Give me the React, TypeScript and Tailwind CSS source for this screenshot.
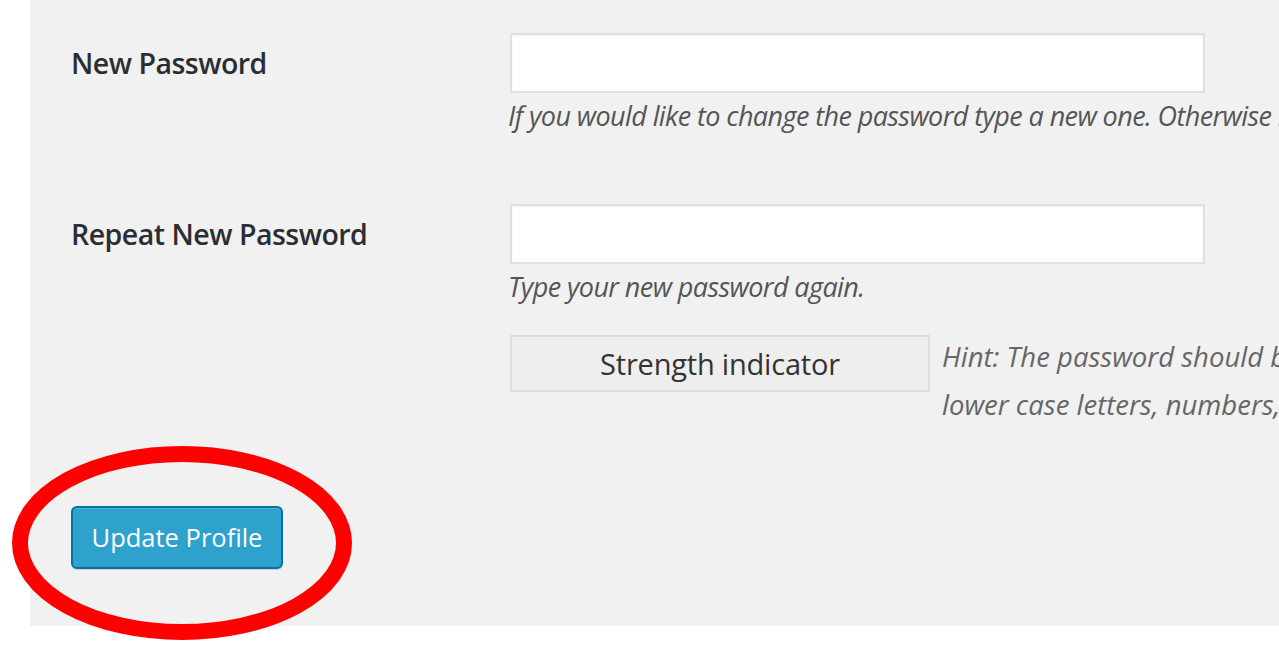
export default function App() {
  const font = { fontFamily: '"Open Sans", "Noto Sans", sans-serif' };

  return (
    <div className="relative h-[646px] w-[1279px] overflow-hidden bg-white" style={font}>
      <div className="ml-[30px] h-[626px] overflow-hidden bg-[#f1f1f1] pl-[41px] pt-[33px]">
        {/* New Password */}
        <div className="flex">
          <div className="flex h-[60px] w-[439px] shrink-0 items-center text-[28.5px] font-semibold tracking-[-0.5px] text-[#2a2e33]">
            New Password
          </div>
          <div className="flex flex-col">
            <div className="h-[60px] w-[695px] border-2 border-[#e0e0e0] bg-white shadow-[inset_0_1px_2px_rgba(0,0,0,0.07)]" />
            <p className="-ml-[2px] mt-[5px] whitespace-nowrap text-[27px] italic leading-[36px] tracking-[-0.6px] text-[#555]">
              If you would like to change the password type a new one. Otherwise leave this blank.
            </p>
          </div>
        </div>

        {/* Repeat New Password */}
        <div className="mt-[70px] flex">
          <div className="flex h-[60px] w-[439px] shrink-0 items-center text-[28.5px] font-semibold tracking-[-0.5px] text-[#2a2e33]">
            Repeat New Password
          </div>
          <div className="flex flex-col">
            <div className="h-[60px] w-[695px] border-2 border-[#e0e0e0] bg-white shadow-[inset_0_1px_2px_rgba(0,0,0,0.07)]" />
            <p className="-ml-[2px] mt-[5px] whitespace-nowrap text-[27px] italic leading-[36px] tracking-[-0.6px] text-[#555]">
              Type your new password again.
            </p>
          </div>
        </div>

        {/* Strength */}
        <div className="mt-[30px] flex">
          <div className="w-[439px] shrink-0" />
          <div className="flex h-[57px] w-[420px] shrink-0 items-center justify-center border-2 border-[#dddddd] bg-[#eeeeee] text-[29px] tracking-[-0.2px] text-[#333]">
            Strength indicator
          </div>
          <p className="-mt-[2px] ml-[12px] whitespace-nowrap text-[27.5px] italic leading-[48px] text-[#666]">
            Hint: The password should be at least seven characters long. To make it stronger, use upper and
            <br />
            lower case letters, numbers, and symbols like ! " ? $ % ^ &amp; ).
          </p>
        </div>

        <button className="mt-[77px] flex h-[63px] w-[212px] items-center justify-center rounded-[6px] border-2 border-[#0074a2] bg-[#2ea2cc] text-[25.5px] text-white shadow-[inset_0_1px_0_rgba(120,200,230,0.5),0_1px_0_rgba(0,0,0,0.15)]">
          Update Profile
        </button>
      </div>

      {/* red highlight ring */}
      <svg className="pointer-events-none absolute left-0 top-0" width="400" height="646">
        <ellipse cx="182" cy="543" rx="162" ry="89" fill="none" stroke="#ff0000" strokeWidth="16" />
      </svg>
    </div>
  );
}
